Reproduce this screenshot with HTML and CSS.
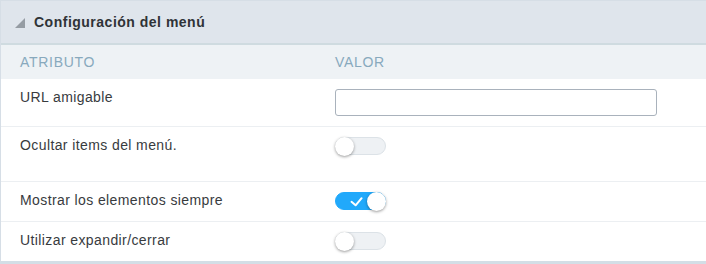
FILE: index.html
```html
<!DOCTYPE html>
<html lang="es">
<head>
<meta charset="utf-8">
<title>Configuración del menú</title>
<link rel="stylesheet" href="styles.css">
</head>
<body>
<div class="panel">
  <div class="panel-head">
    <span class="caret"></span>
    <span class="title">Configuración del menú</span>
  </div>
  <div class="row cols">
    <div class="cell">ATRIBUTO</div>
    <div class="cell">VALOR</div>
  </div>
  <div class="row r1">
    <div class="cell label">URL amigable</div>
    <div class="cell"><input class="text-input" type="text"></div>
  </div>
  <div class="row r2">
    <div class="cell label">Ocultar items del menú.</div>
    <div class="cell"><span class="switch"><span class="knob"></span></span></div>
  </div>
  <div class="row r3">
    <div class="cell label">Mostrar los elementos siempre</div>
    <div class="cell"><span class="switch on">
      <svg class="check" width="51" height="18" viewBox="0 0 51 18"><path d="M16.5 9.8 L20.6 13.3 L26.6 6.2" fill="none" stroke="#fff" stroke-width="2" stroke-linecap="round" stroke-linejoin="round"/></svg>
      <span class="knob"></span></span></div>
  </div>
  <div class="row r4">
    <div class="cell label">Utilizar expandir/cerrar</div>
    <div class="cell"><span class="switch"><span class="knob"></span></span></div>
  </div>
</div>
</body>
</html>
```

FILE: styles.css
```css
* { box-sizing: border-box; }
html, body { margin: 0; padding: 0; background: #fff; }
body { font-family: "Liberation Sans", Arial, sans-serif; }

.panel {
  width: 706px;
  height: 264px;
  border-top: 1px solid #d6dee6;
  border-left: 1px solid #d6dee6;
  border-bottom: 3px solid #d3dee6;
  overflow: hidden;
}

.panel-head {
  height: 44px;
  background: #dfe5ec;
  border-bottom: 2px solid #cfdbe0;
  display: flex;
  align-items: center;
  padding-left: 14px;
  gap: 9px;
}
.caret {
  width: 0;
  height: 0;
  border-style: solid;
  border-width: 0 0 10px 10px;
  border-color: transparent transparent #959ca3 transparent;
  margin-top: 1px;
}
.title {
  font-weight: bold;
  font-size: 14px;
  letter-spacing: 0.5px;
  color: #2f3337;
}

.row {
  display: grid;
  grid-template-columns: 334px 1fr;
  align-items: start;
  border-bottom: 1px solid #eceff2;
}
.cell { padding-top: 10px; }
.row .cell:first-child { padding-left: 19px; }

.cols {
  height: 34px;
  background: #eef2f5;
  border-bottom: none;
  align-items: center;
}
.cols .cell {
  padding-top: 0;
  font-size: 14px;
  letter-spacing: 0.7px;
  color: #88a9bd;
}

.label {
  font-size: 14px;
  line-height: 16px;
  letter-spacing: 0.4px;
  color: #383b3e;
}

.r1 { height: 48px; }
.r2 { height: 55px; }
.r3 { height: 40px; }
.r4 { height: 39px; border-bottom: none; }

.text-input {
  display: block;
  width: 322px;
  height: 27px;
  border: 1px solid #a9b2bc;
  border-radius: 3px;
  background: #fff;
  margin: 0;
  padding: 0 6px;
  outline: none;
}

.switch {
  position: relative;
  display: block;
  width: 51px;
  height: 18px;
  border-radius: 9px;
  background: #eef1f4;
  border: 1px solid #dce2e7;
}
.switch .knob {
  position: absolute;
  left: -1px;
  top: -1px;
  width: 19px;
  height: 19px;
  border-radius: 50%;
  background: #fff;
  box-shadow: 0 1px 3px rgba(0,0,0,0.4);
}
.switch.on {
  background: #21a9fb;
  border-color: #21a9fb;
}
.switch.on .knob {
  left: auto;
  right: -1px;
}
.check {
  position: absolute;
  left: -1px;
  top: -1px;
}
```
